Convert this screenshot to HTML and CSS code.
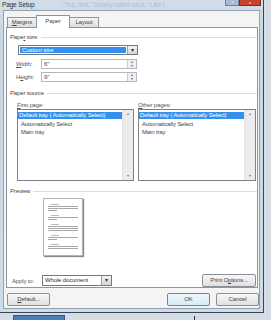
FILE: index.html
```html
<!Doctype html>
<head>
  <meta charset="utf-8">
  <title>Page Setup</title>
  <link rel="stylesheet" href="styles.css">
</head>
<body>
  <div class="window">
    <div class="titlebar">
      <span class="title">Page Setup</span>
      <span class="ghost">“Yes, that,” Dewey noted back. “Like I</span>
      <span class="caption-btns">
        <span class="help">?</span>
        <span class="close">x</span>
      </span>
    </div>

    <div class="client">
      <div class="tabs">
        <span class="tab"><u>M</u>argins</span>
        <span class="tab active">Paper</span>
        <span class="tab">Layout</span>
      </div>

      <div class="panel">
        <div class="group"><span>Pape<u>r</u> size:</span></div>
        <div class="combo wide sel">
          <span class="value">Custom size</span>
          <span class="drop">&#9662;</span>
        </div>
        <div class="field">
          <span class="lbl"><u>W</u>idth:</span>
          <div class="spin"><span class="value">6"</span><span class="arrows">&#9652;<br>&#9662;</span></div>
        </div>
        <div class="field">
          <span class="lbl">H<u>e</u>ight:</span>
          <div class="spin"><span class="value">9"</span><span class="arrows">&#9652;<br>&#9662;</span></div>
        </div>

        <div class="group src"><span>Paper source</span></div>
        <div class="sources">
          <div class="source">
            <span class="lbl"><u>F</u>irst page:</span>
            <div class="listbox">
              <div class="items">
                <span class="item hl">Default tray ( Automatically Select)</span>
                <span class="item">Automatically Select</span>
                <span class="item">Main tray</span>
              </div>
              <div class="scroll"><span>&#9652;</span><span>&#9662;</span></div>
            </div>
          </div>
          <div class="source">
            <span class="lbl"><u>O</u>ther pages:</span>
            <div class="listbox">
              <div class="items">
                <span class="item hl">Default tray ( Automatically Select)</span>
                <span class="item">Automatically Select</span>
                <span class="item">Main tray</span>
              </div>
              <div class="scroll"><span>&#9652;</span><span>&#9662;</span></div>
            </div>
          </div>
        </div>

        <div class="group"><span>Preview</span></div>
        <div class="preview">
          <div class="page">
            <i class="ln s"></i><i class="ln"></i><i class="ln"></i><i class="ln e"></i>
            <i class="ln s"></i><i class="ln"></i><i class="ln e"></i>
            <i class="ln s"></i><i class="ln"></i><i class="ln"></i><i class="ln"></i>
            <i class="ln s"></i><i class="ln"></i><i class="ln e"></i>
            <i class="ln s"></i><i class="ln"></i><i class="ln"></i>
          </div>
        </div>

        <div class="apply">
          <span class="lbl">Appl<u>y</u> to:</span>
          <div class="combo small">
            <span class="value">Whole document</span>
            <span class="drop">&#9662;</span>
          </div>
          <span class="btn print">Print O<u>p</u>tions...</span>
        </div>
      </div>

      <div class="footer">
        <span class="btn"><u>D</u>efault...</span>
        <span class="spacer"></span>
        <span class="btn ok">OK</span>
        <span class="btn">Cancel</span>
      </div>
    </div>
  </div>
  <div class="below">
    <span class="taskbtn"></span>
    <span class="mark"></span>
  </div>
</body>
</html>
```

FILE: styles.css
```css
body{
  margin:0;
  width:271px;
  height:320px;
  overflow:hidden;
  background: #d6dde5;
  font-family: "Liberation Sans", "DejaVu Sans", sans-serif;
  font-size: 6px;
  letter-spacing: -0.15px;
  color: #333;
}

u{
  text-decoration: underline;
}

.window{
  width: 264px;
  height: 313px;
  box-sizing: border-box;
  background: linear-gradient(#d3dde8, #c9d6e3 40px, #cfdbe7);
  border-right: 1px solid #3a4652;
  border-bottom: 1px solid #3a4652;
  padding: 0 3px 3px 3px;
  display: flex;
  flex-direction: column;
}

.titlebar{
  height: 10px;
  display: flex;
  align-items: flex-start;
  position: relative;
}

.title{
  margin-top: 1px;
  margin-left: -1px;
  font-size: 6.5px;
  color: #2a3440;
}

.ghost{
  margin-top: 1px;
  margin-left: 28px;
  font-size: 6.5px;
  color: #aebccb;
  filter: blur(0.6px);
  white-space: nowrap;
}

.caption-btns{
  position: absolute;
  right: -1px;
  top: 0;
  display: flex;
}

.help{
  width: 12px;
  height: 5px;
  background: #a8bbd0;
  border: 1px solid #72879e;
  border-top: none;
  color: #fff;
  font-size: 4px;
  line-height: 5px;
  text-align: center;
}

.close{
  width: 20px;
  height: 5px;
  background: #c4432f;
  border: 1px solid #86291c;
  border-top: none;
  color: #fff;
  font-size: 4px;
  line-height: 5px;
  text-align: center;
}

.client{
  flex: 1;
  background: #f4f4f4;
  border: 1px solid #8fa2b6;
  padding: 0;
  display: flex;
  flex-direction: column;
}

.tabs{
  display: flex;
  align-items: flex-end;
  height: 12px;
  margin: 4px 0 0 3px;
  position: relative;
  z-index: 1;
}

.tab{
  width: 30px;
  height: 10px;
  box-sizing: border-box;
  line-height: 9px;
  text-align: center;
  background: linear-gradient(#f3f3f3, #dedede);
  border: 1px solid #8e959e;
  border-bottom: none;
  margin-right: -1px;
  color: #444;
}

.tab.active{
  width: 34px;
  height: 13px;
  background: #fff;
  line-height: 11px;
  margin-bottom: -1px;
  position: relative;
}

.panel{
  height: 261px;
  box-sizing: border-box;
  background: #fff;
  border: 1px solid #8e959e;
  margin: 0 1px 0 2px;
  padding: 5px 0 0 3px;
  display: flex;
  flex-direction: column;
}

.group{
  display: flex;
  align-items: center;
  gap: 3px;
  color: #444;
  height: 8px;
  line-height: 8px;
}

.group::after{
  content: "";
  flex: 1;
  border-top: 1px solid #dedede;
}

.combo{
  display: flex;
  align-items: stretch;
  height: 10px;
  box-sizing: border-box;
  border: 1px solid #737880;
  background: #fff;
}

.combo .value{
  flex: 1;
  line-height: 8px;
  padding-left: 2px;
  white-space: nowrap;
}

.combo .drop{
  width: 9px;
  border-left: 1px solid #9ea3aa;
  background: linear-gradient(#f4f4f4, #d6d6d6);
  font-size: 6px;
  line-height: 8px;
  text-align: center;
  color: #333;
}

.combo.wide{
  width: 120px;
  margin: 4px 0 4px 8px;
}

.combo.sel .value{
  background: #3390ee;
  color: #fff;
  margin: 1px 1px 1px 1px;
  line-height: 6px;
}

.field{
  display: flex;
  align-items: center;
  margin-left: 6px;
  height: 10px;
  margin-bottom: 3px;
}

.lbl{
  color: #555;
  line-height: 8px;
}

.field .lbl{
  width: 25px;
}

.spin{
  width: 96px;
  height: 10px;
  box-sizing: border-box;
  border: 1px solid #b5b9bf;
  display: flex;
  background: #fff;
}

.spin .value{
  flex: 1;
  line-height: 8px;
  padding-left: 2px;
  color: #444;
}

.spin .arrows{
  width: 8px;
  border-left: 1px solid #ccc;
  background: #efefef;
  font-size: 4px;
  line-height: 4px;
  text-align: center;
  color: #666;
}

.group.src{
  margin-top: 4px;
}

.sources{
  display: flex;
  gap: 4px;
  margin: 4px 0 6px 7px;
}

.source{
  display: flex;
  flex-direction: column;
}

.listbox{
  width: 117px;
  height: 72px;
  box-sizing: border-box;
  border: 1px solid #7d828a;
  background: #fff;
  display: flex;
}

.source + .source .listbox{
  width: 118px;
}

.items{
  flex: 1;
  display: flex;
  flex-direction: column;
  padding-top: 2px;
  min-width: 0;
}

.item{
  line-height: 8px;
  padding-left: 3px;
  color: #444;
  white-space: nowrap;
}

.item.hl{
  background: #3390ee;
  color: #fff;
  padding-left: 1px;
  line-height: 7px;
  margin-bottom: 1px;
}

.scroll{
  width: 10px;
  background: #ececec;
  border-left: 1px solid #e2e2e2;
  display: flex;
  flex-direction: column;
  justify-content: space-between;
  font-size: 4px;
  line-height: 8px;
  text-align: center;
  color: #777;
}

.preview{
  height: 69px;
  padding: 3px 0 0 33px;
  box-sizing: border-box;
}

.page{
  width: 40px;
  height: 58px;
  box-sizing: border-box;
  border: 1px solid #b4b4b4;
  background: #fff;
  box-shadow: 1px 1px 1px #8a8a8a;
  padding: 2px 4px 0 4px;
  display: flex;
  flex-direction: column;
  gap: 1px;
}

.ln{
  display: block;
  height: 1px;
  background: #a8a8a8;
}

.ln.s{
  margin-left: 3px;
  width: 8px;
  background: #bbb;
  margin-top: 3px;
}

.ln.e{
  width: 30%;
}

.apply{
  display: flex;
  align-items: center;
  margin: 14px 0 0 2px;
  height: 13px;
}

.apply .lbl{
  width: 30px;
}

.combo.small{
  width: 70px;
  height: 11px;
}

.combo.small .value{
  line-height: 9px;
}

.combo.small .drop{
  width: 9px;
  line-height: 9px;
}

.btn{
  display: inline-block;
  height: 13px;
  box-sizing: border-box;
  border: 1px solid #8a8f96;
  border-radius: 2px;
  background: linear-gradient(#f7f7f7, #e0e0e0);
  line-height: 11px;
  text-align: center;
  color: #444;
}

.btn.print{
  width: 54px;
  margin: 0 1px 0 auto;
}

.footer{
  display: flex;
  gap: 6px;
  margin-top: 5px;
  padding: 0 0 0 3px;
}

.footer .btn{
  width: 43px;
}

.footer .spacer{
  flex: 1;
}

.btn.ok{
  border-color: #3d95cc;
  background: linear-gradient(#eef6fb, #d8ebf6);
}

.below{
  height: 7px;
  padding-left: 13px;
  display: flex;
  align-items: flex-end;
}

.taskbtn{
  width: 50px;
  height: 4px;
  background: #4b7fb5;
  border: 1px solid #2c5a8c;
  border-bottom: none;
}

.mark{
  width: 1px;
  height: 4px;
  margin-left: 129px;
  background: #333;
}
```
